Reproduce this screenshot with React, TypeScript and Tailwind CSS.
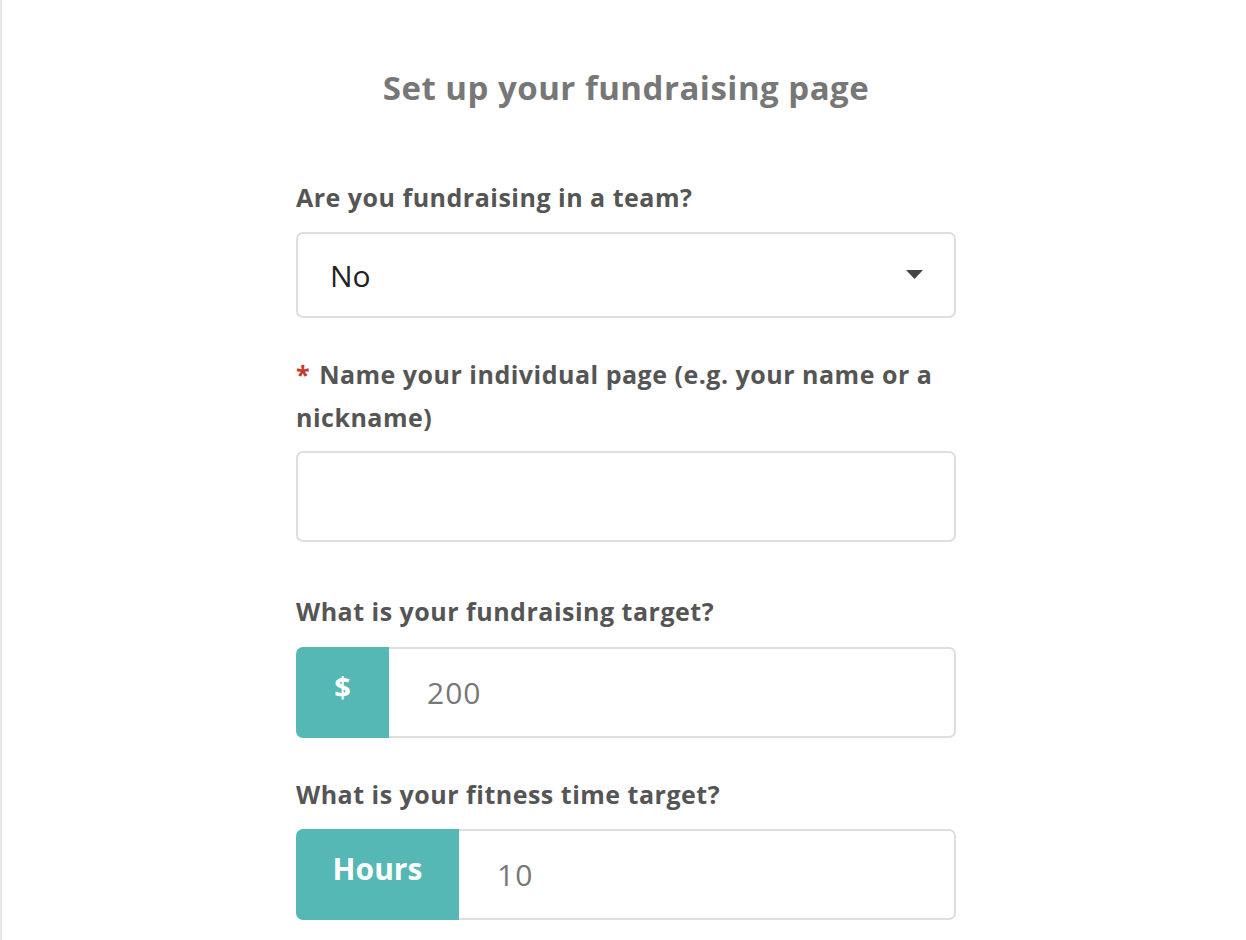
import React, { useState } from "react";

const labelCls =
  "block text-[25px] leading-[43px] font-bold text-[#555555] tracking-[0.5px]";

export default function App() {
  const [team, setTeam] = useState("No");
  const [pageName, setPageName] = useState("");
  const [amount, setAmount] = useState("");
  const [hours, setHours] = useState("");

  return (
    <div
      className="min-h-screen bg-white border-l-2 border-[#e6e6e6]"
      style={{ fontFamily: "'Open Sans', Lato, sans-serif" }}
    >
      <div className="w-[660px] pt-[66px] pb-10 ml-[294px]">
        <h1 className="text-center text-[33px] leading-[43px] font-bold text-[#777777] tracking-[0.5px]">
          Set up your fundraising page
        </h1>

        {/* Team */}
        <label className={`${labelCls} mt-[67px]`}>Are you fundraising in a team?</label>
        <div className="relative mt-[13px]">
          <select
            value={team}
            onChange={(e) => setTeam(e.target.value)}
            className="appearance-none w-full h-[86px] rounded-[7px] border-2 border-[#dedede] bg-white pl-[32px] pr-12 text-[30px] text-[#222222] outline-none"
          >
            <option>No</option>
            <option>Yes</option>
          </select>
          <svg
            className="pointer-events-none absolute right-[33px] top-[38px]"
            width="17"
            height="9"
            viewBox="0 0 17 9"
          >
            <path d="M0 0h17L8.5 9z" fill="#444444" />
          </svg>
        </div>

        {/* Page name */}
        <label className={`${labelCls} mt-[35px]`}>
          <span className="text-[#c8382c] mr-[9px]">*</span>
          Name your individual page (e.g. your name or a nickname)
        </label>
        <input
          value={pageName}
          onChange={(e) => setPageName(e.target.value)}
          className="mt-[12px] block w-full h-[91px] rounded-[7px] border-2 border-[#dedede] bg-white px-8 text-[30px] text-[#222222] outline-none"
        />

        {/* Fundraising target */}
        <label className={`${labelCls} mt-[48px]`}>What is your fundraising target?</label>
        <div className="mt-[14px] flex h-[91px]">
          <span className="w-[93px] shrink-0 flex items-center justify-center pb-3 rounded-l-[7px] bg-[#55b8b4] text-white text-[29px] font-bold">
            $
          </span>
          <input
            value={amount}
            onChange={(e) => setAmount(e.target.value)}
            placeholder="200"
            className="flex-1 min-w-0 rounded-r-[7px] border-2 border-l-0 border-[#dedede] bg-white pl-[38px] text-[30px] tracking-[1px] text-[#555555] placeholder:text-[#777777] outline-none"
          />
        </div>

        {/* Fitness time target */}
        <label className={`${labelCls} mt-[35px]`}>What is your fitness time target?</label>
        <div className="mt-[13px] flex h-[91px]">
          <span className="w-[163px] shrink-0 flex items-center justify-center pb-3 rounded-l-[7px] bg-[#55b8b4] text-white text-[30px] font-bold">
            Hours
          </span>
          <input
            value={hours}
            onChange={(e) => setHours(e.target.value)}
            placeholder="10"
            className="flex-1 min-w-0 rounded-r-[7px] border-2 border-l-0 border-[#dedede] bg-white pl-[38px] text-[30px] tracking-[1px] text-[#555555] placeholder:text-[#777777] outline-none"
          />
        </div>
      </div>
    </div>
  );
}
